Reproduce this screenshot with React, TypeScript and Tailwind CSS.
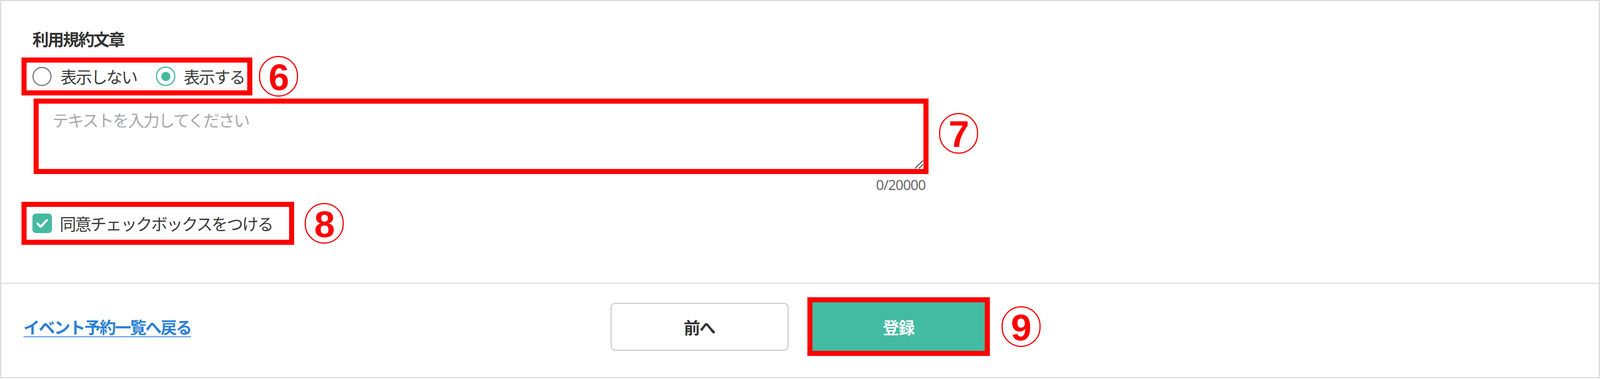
import React from "react";

const JP = { fontFamily: '"Noto Sans CJK JP", "Noto Sans", sans-serif' };

function Circled({ n }: { n: string }) {
  return (
    <div
      className="flex h-[104px] w-[100px] shrink-0 items-center justify-center rounded-full border-[3px] border-[#ff0000] text-[95px] font-bold leading-none tracking-[-2px] text-[#ff0000]"
      style={{ fontFamily: '"Liberation Sans", Arial, sans-serif' }}
    >
      <span className="translate-y-[2px]">{n}</span>
    </div>
  );
}

export default function App() {
  return (
    <div className="h-[969px] w-full overflow-hidden bg-white" style={JP}>
      <div className="flex h-[967px] w-full flex-col border-[3px] border-[#dcdcdc] bg-white">
        {/* upper section */}
        <div className="flex flex-col pb-[97px] pl-[52px] pt-[75px]">
          <div className="ml-[28px] text-[42px] font-bold leading-[42px] tracking-[-3px] text-[#333333]">利用規約文章</div>

          {/* radios */}
          <div className="mt-[23px] flex items-center">
            <div className="flex h-[97px] w-[591px] items-center gap-[49px] border-[13px] border-[#ff0000] pl-[15px]">
              <label className="flex items-center gap-[23px]">
                <span className="h-[49px] w-[49px] rounded-full border-[3px] border-[#777777] bg-white" />
                <span className="text-[42px] leading-[48px] tracking-[-3px] text-[#3a3a3a]">表示しない</span>
              </label>
              <label className="flex items-center gap-[21px]">
                <span className="flex h-[50px] w-[50px] items-center justify-center rounded-full border-[3px] border-[#45ba9f] bg-white">
                  <span className="h-[23px] w-[23px] rounded-full bg-[#45ba9f]" />
                </span>
                <span className="text-[42px] leading-[48px] tracking-[-3px] text-[#3a3a3a]">表示する</span>
              </label>
            </div>
            <div className="ml-[17px]">
              <Circled n="6" />
            </div>
          </div>

          {/* textarea */}
          <div className="mt-[5px] ml-[31px] flex items-start">
            <div className="flex flex-col">
              <div className="relative h-[193px] w-[2291px] border-[13px] border-[#ff0000] bg-white">
                <textarea
                  className="h-full w-full resize-none bg-white pl-[35px] pt-[9px] text-[42px] leading-[63px] tracking-[-3px] text-[#333] outline-none placeholder:text-[#a7a7ae]"
                  style={JP}
                  placeholder="テキストを入力してください"
                />
                <svg
                  className="absolute bottom-0 right-0 h-[24px] w-[24px]"
                  viewBox="0 0 24 24"
                  fill="none"
                  stroke="#555"
                  strokeWidth="2.5"
                  strokeLinecap="round"
                >
                  <line x1="22" y1="3" x2="3" y2="22" />
                  <line x1="22" y1="13" x2="13" y2="22" />
                </svg>
              </div>
              <div
                className="mt-[10px] pr-[8px] text-right text-[36px] leading-[36px] tracking-[-1.5px] text-[#6b6b6b]"
                style={{ fontFamily: '"Noto Sans", "Open Sans", sans-serif' }}
              >
                0/20000
              </div>
            </div>
            <div className="ml-[27px] mt-[37px]">
              <Circled n="7" />
            </div>
          </div>

          {/* checkbox */}
          <div className="mt-[25px] flex items-center">
            <div className="flex h-[110px] w-[698px] items-center gap-[20px] border-[13px] border-[#ff0000] pl-[15px]">
              <span className="flex h-[50px] w-[50px] items-center justify-center rounded-[9px] bg-[#45ba9f]">
                <svg viewBox="0 0 24 24" className="h-[38px] w-[38px]" fill="none" stroke="#ffffff" strokeWidth="3.6" strokeLinecap="round" strokeLinejoin="round">
                  <path d="M4.5 12.5l5 5L19.5 7" />
                </svg>
              </span>
              <span className="text-[42px] leading-[48px] tracking-[-3px] text-[#3a3a3a]">同意チェックボックスをつける</span>
            </div>
            <div className="ml-[27px]">
              <Circled n="8" />
            </div>
          </div>
        </div>

        {/* footer */}
        <div className="grid flex-1 grid-cols-[1fr_auto_1fr] items-start border-t-[3px] border-[#dcdcdc] pt-[34px]">
          <div className="flex h-[150px] items-center pl-[57px]">
            <a href="#" className="text-[42px] font-bold leading-[48px] tracking-[-3px] text-[#2b80d4] underline decoration-[2px] underline-offset-[7px]">
              イベント予約一覧へ戻る
            </a>
          </div>
          <div className="flex h-[150px] items-center gap-[48px]">
            <button className="flex h-[123px] w-[456px] items-center justify-center rounded-[12px] border-[3px] border-[#cfcfcf] bg-white text-[42px] font-bold tracking-[-2px] text-[#333333]" style={JP}>
              前へ
            </button>
            <div className="border-[13px] border-[#ff0000]">
              <button className="flex h-[124px] w-[441px] items-center justify-center bg-[#43bba2] text-[42px] font-bold tracking-[-2px] text-white" style={JP}>
                登録
              </button>
            </div>
          </div>
          <div className="flex h-[150px] items-center pl-[30px]">
            <Circled n="9" />
          </div>
        </div>
      </div>
    </div>
  );
}
